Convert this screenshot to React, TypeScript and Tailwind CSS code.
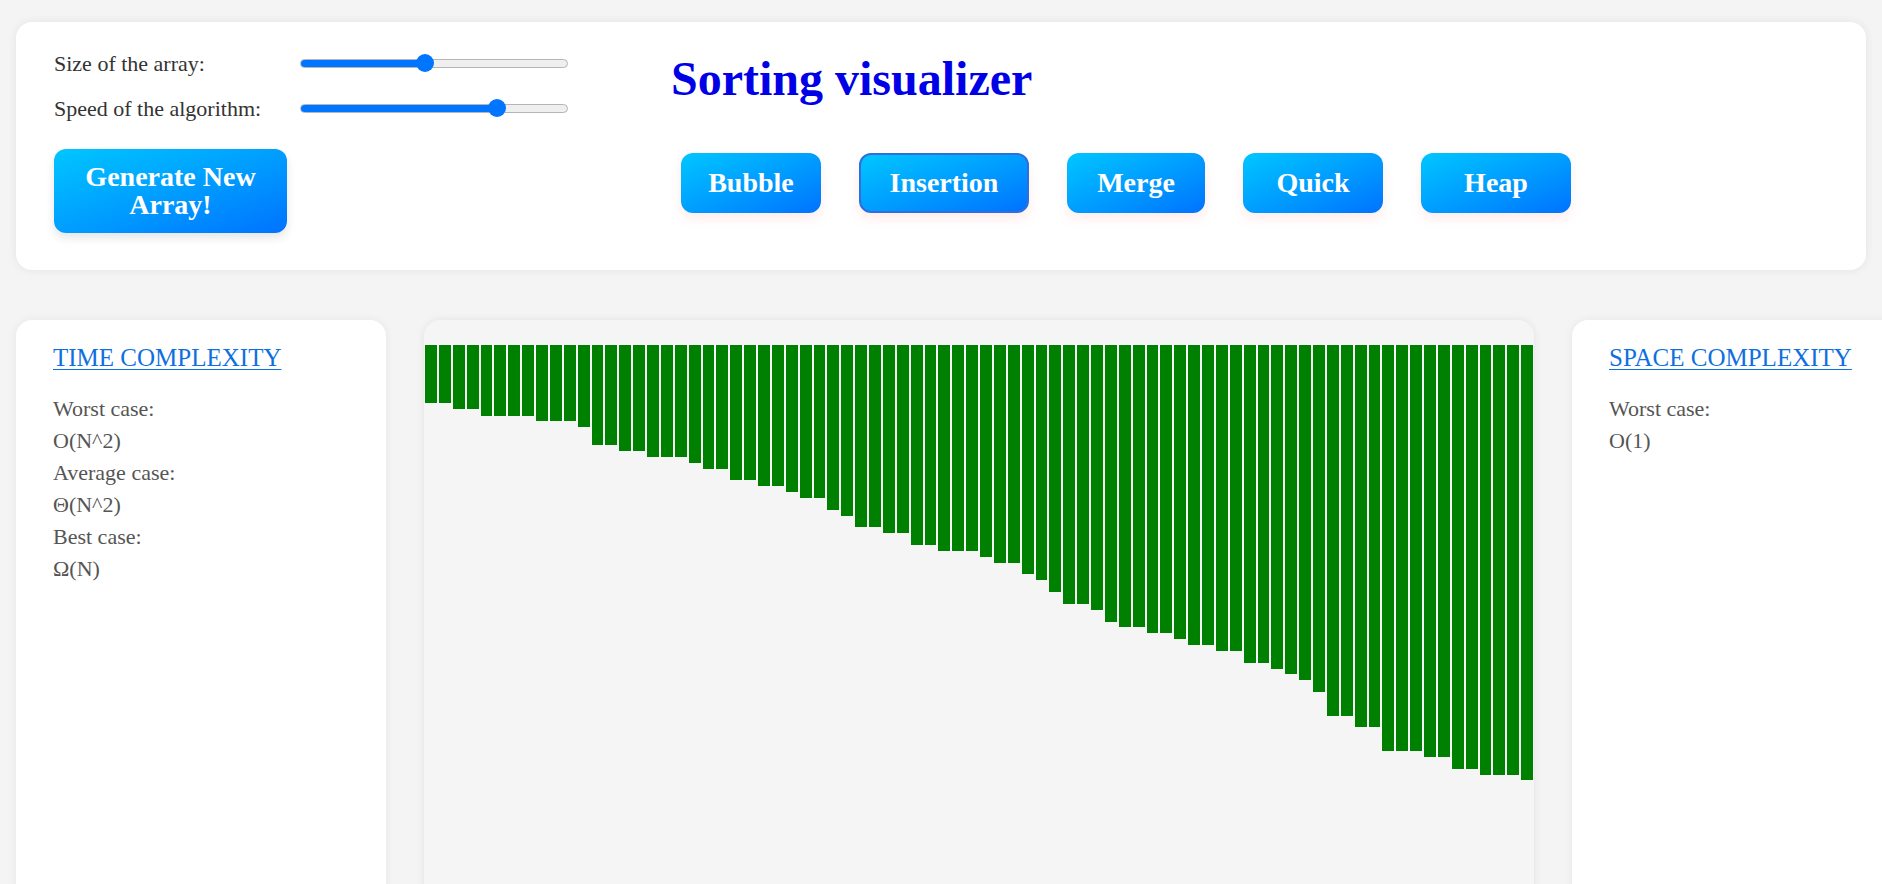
const heights = [
  58, 58, 64, 64, 71, 71, 71, 71, 76, 76, 76, 82, 100, 100, 106, 106, 112, 112, 112, 118,
  124, 124, 135, 135, 141, 141, 147, 153, 153, 165, 171, 182, 182, 188, 188, 200, 200, 206, 206, 206,
  212, 218, 218, 229, 235, 247, 259, 259, 265, 277, 282, 282, 288, 288, 294, 300, 300, 306, 306, 318,
  318, 324, 329, 335, 347, 371, 371, 382, 382, 406, 406, 406, 412, 412, 424, 424, 430, 430, 430, 435,
]

const algorithms = [
  { name: 'Bubble', width: 'w-[140px]' },
  { name: 'Insertion', width: 'w-[170px]', active: true },
  { name: 'Merge', width: 'w-[138px]' },
  { name: 'Quick', width: 'w-[140px]' },
  { name: 'Heap', width: 'w-[150px]' },
]

function Slider({ thumb }: { thumb: number }) {
  return (
    <div className="relative w-[268px] h-[18px] flex items-center">
      <div className="w-full h-[9px] rounded-full bg-[#efefef] border border-[#b5b5b5] overflow-hidden">
        <div className="h-full bg-[#0075ff]" style={{ width: thumb + 9 }} />
      </div>
      <div className="absolute top-0 w-[18px] h-[18px] rounded-full bg-[#0075ff]" style={{ left: thumb }} />
    </div>
  )
}

function InfoCard({ title, rows }: { title: string; rows: string[] }) {
  return (
    <div className="w-[370px] shrink-0 h-[600px] bg-white rounded-2xl shadow-[0_0_10px_rgba(0,0,0,0.06)] pl-[37px] pt-[23px]">
      <a href="#" className="block text-[25px] leading-[30px] text-[#0f6fe0] underline underline-offset-[3px] decoration-1">
        {title}
      </a>
      <div className="mt-[20px] text-[22px] leading-[32px] text-[#555]">
        {rows.map((r) => (
          <p key={r}>{r}</p>
        ))}
      </div>
    </div>
  )
}

export default function App() {
  return (
    <div className="h-screen overflow-hidden bg-[#f4f4f4] px-4 pt-[22px] font-['Liberation_Serif',serif]">
      <div className="w-[1850px] h-[248px] bg-white rounded-2xl shadow-[0_0_10px_rgba(0,0,0,0.07)] flex pl-[38px] pt-[25px]">
        <div className="w-[514px] shrink-0">
          <div className="flex items-center h-[32px]">
            <span className="w-[246px] text-[22px] text-[#333]">Size of the array:</span>
            <Slider thumb={116} />
          </div>
          <div className="flex items-center h-[32px] mt-[13px]">
            <span className="w-[246px] text-[22px] text-[#333]">Speed of the algorithm:</span>
            <Slider thumb={188} />
          </div>
          <button className="mt-[25px] w-[233px] h-[84px] rounded-xl bg-gradient-to-br from-[#00c6ff] to-[#0072ff] text-white font-bold text-[28px] leading-[28px] shadow-[0_5px_10px_rgba(0,0,0,0.1)]">
            Generate New
            <br />
            Array!
          </button>
        </div>
        <div className="ml-[103px]">
          <h1 className="mt-[6px] text-[48px] leading-[52px] font-bold text-[#0000e6]">Sorting visualizer</h1>
          <div className="flex gap-[38px] mt-[48px] ml-[10px]">
            {algorithms.map((a) => (
              <button
                key={a.name}
                className={`${a.width} h-[60px] rounded-xl bg-gradient-to-br from-[#00c6ff] to-[#0072ff] text-white font-bold text-[28px] shadow-[0_6px_12px_rgba(255,110,110,0.13)] ${
                  a.active ? 'border-2 border-[#2f6fdc]' : ''
                }`}
              >
                {a.name}
              </button>
            ))}
          </div>
        </div>
      </div>

      <div className="flex gap-[38px] mt-[50px]">
        <InfoCard
          title="TIME COMPLEXITY"
          rows={['Worst case:', 'O(N^2)', 'Average case:', 'Θ(N^2)', 'Best case:', 'Ω(N)']}
        />
        <div className="w-[1110px] shrink-0 h-[600px] bg-[#f5f5f5] rounded-t-2xl shadow-[0_0_8px_rgba(0,0,0,0.08)] px-px pt-[25px]">
          <div className="flex items-start gap-[2px]">
            {heights.map((h, i) => (
              <div key={i} className="flex-1 bg-[#008000]" style={{ height: h }} />
            ))}
          </div>
        </div>
        <InfoCard title="SPACE COMPLEXITY" rows={['Worst case:', 'O(1)']} />
      </div>
    </div>
  )
}
